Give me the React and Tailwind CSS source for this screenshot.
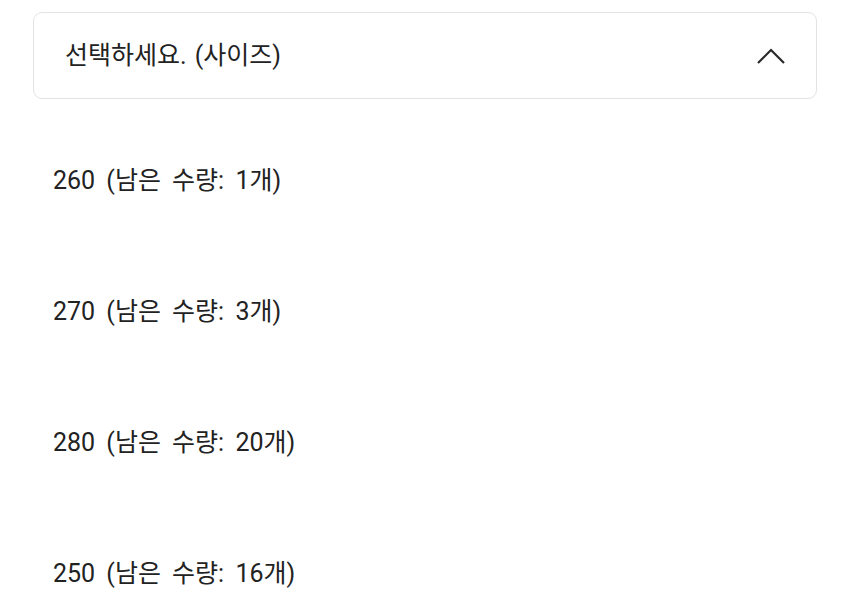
import React, { useState } from 'react';

const sizes = [
  { size: 260, stock: 1 },
  { size: 270, stock: 3 },
  { size: 280, stock: 20 },
  { size: 250, stock: 16 },
];

const App = () => {
  const [open, setOpen] = useState(true);

  return (
    <div
      className="h-screen overflow-hidden bg-white px-[33px] pt-[12px] text-[#222222]"
      style={{ fontFamily: 'Roboto, "Noto Sans CJK KR", sans-serif' }}
    >
      <button
        type="button"
        onClick={() => setOpen(!open)}
        className="flex h-[87px] w-full items-center justify-between rounded-[9px] border border-[#e3e3e3] pl-[31px] pr-[30px] text-left"
      >
        <span className="text-[25px] leading-none [word-spacing:2px]">선택하세요. (사이즈)</span>
        <svg width="30" height="18" viewBox="0 0 30 18" fill="none" className={open ? '' : 'rotate-180'}>
          <path d="M2 16 L15 3 L28 16" stroke="#2a2a2a" strokeWidth="2.2" />
        </svg>
      </button>

      {open && (
        <ul className="mt-[16px]">
          {sizes.map((item) => (
            <li
              key={item.size}
              className="flex h-[131px] items-center pl-[20px] text-[25px] leading-none [word-spacing:5px]"
            >
              {item.size} (남은 수량: {item.stock}개)
            </li>
          ))}
        </ul>
      )}
    </div>
  );
};

export default App;
